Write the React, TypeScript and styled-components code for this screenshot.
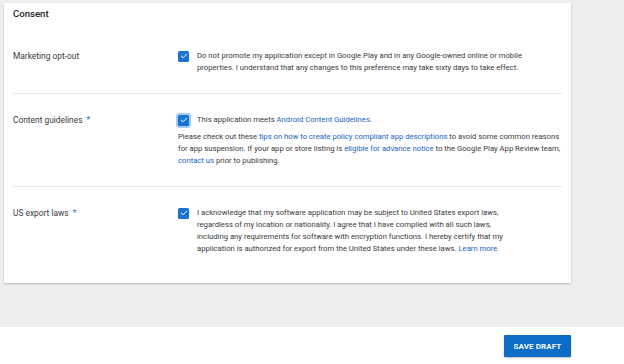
import * as React from "react";
import styled, { createGlobalStyle } from "styled-components";

const BLUE = "#1a73d1";
const LINK = "#1764c0";
const TEXT = "#3a3a3a";

const GlobalStyle = createGlobalStyle`
  html, body {
    margin: 0;
    padding: 0;
    background: #ffffff;
    font-family: Roboto, "Liberation Sans", Arial, sans-serif;
  }
`;

const Page = styled.div`
  width: 624px;
  height: 364px;
  display: flex;
  flex-direction: column;
  overflow: hidden;
`;

const Canvas = styled.div`
  height: 327px;
  background: #eeeeee;
  padding: 3px 0 0 4px;
  box-sizing: border-box;
`;

const Card = styled.section`
  width: 567px;
  height: 280px;
  background: #ffffff;
  box-shadow: 0 1px 2px rgba(0, 0, 0, 0.22);
  padding: 4px 9px 0 9px;
  box-sizing: border-box;
`;

const Title = styled.h2`
  margin: 0 0 9px;
  font-size: 9.6px;
  line-height: 14px;
  font-weight: 500;
  color: #222;
`;

const Row = styled.div<{ $last?: boolean }>`
  display: grid;
  grid-template-columns: 165px 1fr;
  padding: 20px 0 ${(p) => (p.$last ? "0" : "19px")};
  border-bottom: ${(p) => (p.$last ? "none" : "1px solid #e8e8e8")};
`;

const Label = styled.div`
  font-size: 8.4px;
  line-height: 12px;
  color: ${TEXT};
`;

const Required = styled.span`
  color: ${BLUE};
  margin-left: 4px;
`;

const Option = styled.div`
  display: flex;
  align-items: flex-start;
  gap: 8px;
`;

const Box = styled.span<{ $focus?: boolean }>`
  flex: none;
  width: 11px;
  height: 11px;
  margin-top: 0.5px;
  border-radius: 1.5px;
  background: ${BLUE};
  display: flex;
  align-items: center;
  justify-content: center;
  box-shadow: ${(p) =>
    p.$focus ? "0 0 0 2px rgba(90, 160, 235, 0.55)" : "none"};
`;

const Text = styled.p`
  margin: 0;
  font-size: 7.7px;
  line-height: 12px;
  color: ${TEXT};
  white-space: nowrap;
`;

const Note = styled(Text)`
  margin-top: 5px;
`;

const Link = styled.a`
  color: ${LINK};
  text-decoration: none;
`;

const Footer = styled.div`
  flex: 1;
  display: flex;
  justify-content: flex-end;
  align-items: flex-start;
  padding: 8px 53px 0 0;
`;

const Button = styled.button`
  width: 67px;
  height: 22px;
  border: none;
  border-radius: 1px;
  background: #0c6cc6;
  color: #ffffff;
  font-family: Roboto, "Liberation Sans", Arial, sans-serif;
  font-size: 8px;
  font-weight: 700;
  letter-spacing: 0.1px;
  box-shadow: 0 1px 2px rgba(0, 0, 0, 0.25);
  padding: 0;
`;

function Check({ focus }: { focus?: boolean }) {
  return (
    <Box $focus={focus}>
      <svg width="8" height="8" viewBox="0 0 24 24">
        <path
          d="M4 12.5l5 5L20 6.5"
          fill="none"
          stroke="#fff"
          strokeWidth="3"
          strokeLinecap="square"
        />
      </svg>
    </Box>
  );
}

export default function App() {
  return (
    <Page>
      <GlobalStyle />
      <Canvas>
        <Card>
          <Title>Consent</Title>
          <Row>
            <Label>Marketing opt-out</Label>
            <Option>
              <Check />
              <Text>
                Do not promote my application except in Google Play and in any
                Google-owned online or mobile
                <br />
                properties. I understand that any changes to this preference
                may take sixty days to take effect.
              </Text>
            </Option>
          </Row>
          <Row>
            <Label>
              Content guidelines<Required>*</Required>
            </Label>
            <div>
              <Option>
                <Check focus />
                <Text>
                  This application meets{" "}
                  <Link>Android Content Guidelines</Link>.
                </Text>
              </Option>
              <Note>
                Please check out these{" "}
                <Link>tips on how to create policy compliant app descriptions</Link>{" "}
                to avoid some common reasons
                <br />
                for app suspension. If your app or store listing is{" "}
                <Link>eligible for advance notice</Link> to the Google Play App
                Review team,
                <br />
                <Link>contact us</Link> prior to publishing.
              </Note>
            </div>
          </Row>
          <Row $last>
            <Label>
              US export laws<Required>*</Required>
            </Label>
            <Option>
              <Check />
              <Text>
                I acknowledge that my software application may be subject to
                United States export laws,
                <br />
                regardless of my location or nationality. I agree that I have
                complied with all such laws,
                <br />
                including any requirements for software with encryption
                functions. I hereby certify that my
                <br />
                application is authorized for export from the United States
                under these laws. <Link>Learn more</Link>
              </Text>
            </Option>
          </Row>
        </Card>
      </Canvas>
      <Footer>
        <Button>SAVE DRAFT</Button>
      </Footer>
    </Page>
  );
}
